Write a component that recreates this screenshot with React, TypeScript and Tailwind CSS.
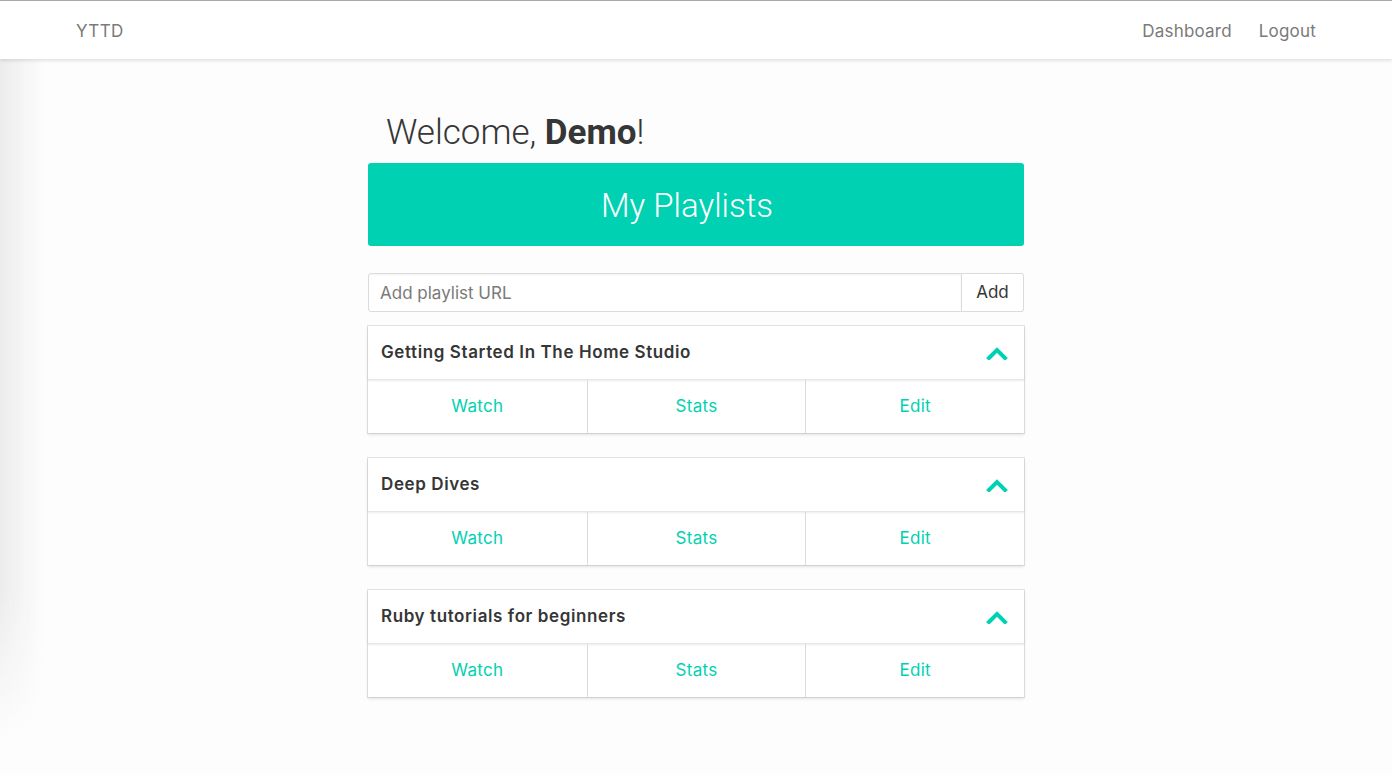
import React from 'react';

const playlists = [
  'Getting Started In The Home Studio',
  'Deep Dives',
  'Ruby tutorials for beginners',
];

const ChevronUp = () => (
  <svg width="22" height="14" viewBox="0 0 22 14" className="text-[#00d1b2]">
    <path d="M3 12 L11 4 L19 12" fill="none" stroke="currentColor" strokeWidth="4" strokeLinecap="square" />
  </svg>
);

const PlaylistCard: React.FC<{ title: string }> = ({ title }) => (
  <div className="bg-white shadow-[0_2px_3px_rgba(10,10,10,0.1),0_0_0_1px_rgba(10,10,10,0.1)]">
    <div className="h-[54px] flex items-center justify-between pl-[13px] pr-[16px] border-b border-[#e6e6e6] shadow-[0_1px_2px_rgba(10,10,10,0.08)]">
      <span className="text-[17px] font-semibold text-[#363636] tracking-[0.6px]">{title}</span>
      <ChevronUp />
    </div>
    <div className="h-[53px] grid grid-cols-3">
      {['Watch', 'Stats', 'Edit'].map((label, i) => (
        <a
          key={label}
          className={`flex items-center justify-center text-[17px] text-[#00d1b2] tracking-[0.3px] ${i > 0 ? 'border-l border-[#dbdbdb]' : ''}`}
        >
          {label}
        </a>
      ))}
    </div>
  </div>
);

export default function App() {
  return (
    <div
      className="min-h-[775px] bg-[#fdfdfd] relative overflow-hidden"
      style={{ fontFamily: 'Inter, "Noto Sans", sans-serif' }}
    >
      {/* left screenshot shade */}
      <div className="absolute left-0 top-0 w-[44px] h-[740px] bg-gradient-to-r from-[#ececec] to-transparent pointer-events-none [mask-image:linear-gradient(to_bottom,black_80%,transparent)]" />

      <nav className="relative h-[59px] bg-white border-t border-[#a9a9a9] shadow-[0_2px_3px_rgba(10,10,10,0.1)] flex items-center justify-between pl-[76px] pr-[76px] pt-[3px]">
        <span className="text-[17px] text-[#7a7a7a] tracking-[0.4px]">YTTD</span>
        <div className="flex items-center gap-[27px] text-[17px] text-[#7a7a7a] tracking-[0.2px]">
          <a>Dashboard</a>
          <a>Logout</a>
        </div>
      </nav>

      <main className="relative w-[656px] mx-auto pt-[50px]">
        <h1
          className="pl-[18px] text-[35px] font-light text-[#363636] leading-[47px]"
          style={{ fontFamily: 'Roboto, sans-serif' }}
        >
          Welcome, <span className="font-bold">Demo</span>!
        </h1>
        <div className="mt-[7px] h-[83px] rounded-[3px] bg-[#00d1b2] flex items-center justify-center pr-[18px] pt-[3px]">
          <span className="text-[33px] font-light text-white" style={{ fontFamily: 'Roboto, sans-serif' }}>
            My Playlists
          </span>
        </div>

        <div className="mt-[27px] flex h-[39px]">
          <input
            placeholder="Add playlist URL"
            className="flex-1 h-full border border-[#dbdbdb] rounded-l-[3px] px-[11px] text-[17px] text-[#363636] placeholder:text-[#7a7a7a] bg-white shadow-[inset_0_1px_2px_rgba(10,10,10,0.05)] outline-none"
          />
          <button className="w-[62px] h-full border border-l-0 border-[#dbdbdb] rounded-r-[3px] bg-white text-[17px] text-[#363636]">
            Add
          </button>
        </div>

        <div className="mt-[14px] flex flex-col gap-[25px]">
          {playlists.map((p) => (
            <PlaylistCard key={p} title={p} />
          ))}
        </div>
      </main>
    </div>
  );
}
